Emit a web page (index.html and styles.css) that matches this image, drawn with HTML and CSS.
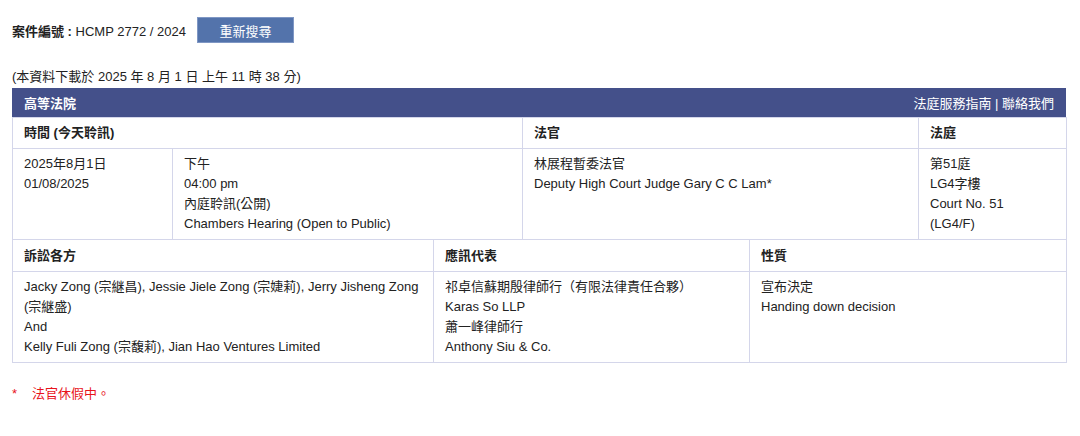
FILE: index.html
```html
<!DOCTYPE html>
<html lang="zh-Hant">
<head>
<meta charset="utf-8">
<title>案件編號 : HCMP 2772 / 2024</title>
<link rel="stylesheet" href="styles.css">
</head>
<body>
<div class="page">
  <div class="case-line">
    <span class="case-no"><b>案件編號 :</b> HCMP 2772 / 2024</span>
    <button class="btn" type="button">重新搜尋</button>
  </div>
  <div class="stamp">(本資料下載於 2025 年 8 月 1 日 上午 11 時 38 分)</div>
  <div class="bar">
    <span class="bar-title">高等法院</span>
    <span class="bar-links">法庭服務指南 | 聯絡我們</span>
  </div>
  <table class="grid t1">
    <colgroup><col class="c1"><col class="c2"><col class="c3"><col class="c4"></colgroup>
    <tr class="head">
      <th colspan="2">時間 (今天聆訊)</th>
      <th>法官</th>
      <th>法庭</th>
    </tr>
    <tr>
      <td>2025年8月1日<br>01/08/2025</td>
      <td>下午<br>04:00 pm<br>內庭聆訊(公開)<br>Chambers Hearing (Open to Public)</td>
      <td>林展程暫委法官<br>Deputy High Court Judge Gary C C Lam*</td>
      <td>第51庭<br>LG4字樓<br>Court No. 51<br>(LG4/F)</td>
    </tr>
  </table>
  <table class="grid t2">
    <colgroup><col class="d1"><col class="d2"><col class="d3"></colgroup>
    <tr class="head">
      <th>訴訟各方</th>
      <th>應訊代表</th>
      <th>性質</th>
    </tr>
    <tr>
      <td>Jacky Zong (宗継昌), Jessie Jiele Zong (宗婕莉), Jerry Jisheng Zong (宗継盛)<br>And<br>Kelly Fuli Zong (宗馥莉), Jian Hao Ventures Limited</td>
      <td>祁卓信蘇期殷律師行（有限法律責任合夥）<br>Karas So LLP<br>蕭一峰律師行<br>Anthony Siu &amp; Co.</td>
      <td>宣布決定<br>Handing down decision</td>
    </tr>
  </table>
  <div class="note"><span class="star">*</span><span>法官休假中。</span></div>
</div>
</body>
</html>
```

FILE: styles.css
```css
html, body {
  margin: 0;
  padding: 0;
  background: #ffffff;
}
body {
  font-family: "Liberation Sans", Arial, "Noto Sans CJK TC", sans-serif;
  font-size: 13px;
  color: #222222;
}
.page {
  padding: 17px 14px 0 12px;
}
.case-line {
  display: flex;
  align-items: center;
  height: 26px;
}
.case-no b {
  font-weight: bold;
}
.btn {
  margin-left: 11px;
  width: 97px;
  height: 26px;
  border: 1px solid #7f97c4;
  background: #5373ab;
  color: #ffffff;
  font-family: "Liberation Sans", Arial, "Noto Sans CJK TC", sans-serif;
  font-size: 13px;
  padding: 0;
}
.stamp {
  margin-top: 26px;
  line-height: 16px;
}
.bar {
  margin-top: 3px;
  height: 29px;
  background: #44508a;
  color: #ffffff;
  display: flex;
  align-items: center;
  justify-content: space-between;
  padding: 0 12px;
}
.bar-title {
  font-weight: bold;
}
.grid {
  width: 100%;
  table-layout: fixed;
  border-collapse: collapse;
}
.grid th, .grid td {
  border: 1px solid #d4d6ea;
  padding: 5px 11px;
  line-height: 20px;
  text-align: left;
  vertical-align: top;
}
.grid th {
  font-weight: bold;
}
.t2 tr.head th {
  border-top: none;
  padding-top: 6px;
}
.c1 { width: 160px; }
.c2 { width: 350px; }
.c3 { width: 396px; }
.c4 { width: 148px; }
.d1 { width: 421px; }
.d2 { width: 316px; }
.d3 { width: 317px; }
.note {
  margin-top: 23px;
  color: #e8141b;
  display: flex;
  line-height: 16px;
}
.star {
  width: 20px;
}
```
